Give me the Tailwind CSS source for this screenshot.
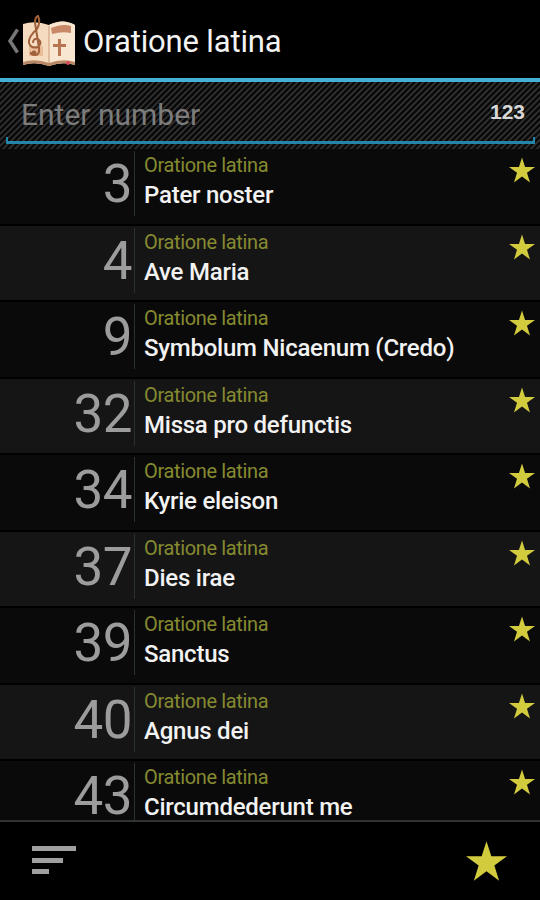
<!DOCTYPE html>
<html lang="en">
  <head>
    <meta charset="UTF-8" />
    <meta name="viewport" content="width=device-width, initial-scale=1.0" />
    <script src="https://cdn.jsdelivr.net/npm/@tailwindcss/browser@4"></script>

    <title>Oratione latina</title>
  </head>
  <body class="bg-black font-['Roboto',sans-serif]">
    <div class="flex flex-col h-[900px] w-[540px] overflow-hidden">
      <header class="flex items-center h-[78px] shrink-0 pl-[7px] pt-1 bg-black">
        <svg class="w-3 h-[26px]" viewBox="0 0 12 26">
          <path d="M10.500 1.500 3 13l7.500 11.500" fill="none" stroke="#777" stroke-width="3.500" />
        </svg>
        <!-- songbook logo -->
        <svg class="w-[56px] h-[52px] ml-[2px] mt-2 overflow-visible" viewBox="0 0 56 52">
          <path d="M2 5Q14 1 28 6Q42 -1 54 6V46Q42 42 28 47Q14 42 2 46Z" fill="#f5dcc0" />
          <path d="M28 6Q42 -1 54 6V44Q42 40 28 45Z" fill="#f9e6d0" />
          <path d="M2 43Q14 39 28 44Q42 39 54 43V46Q42 42 28 47Q14 42 2 46Z" fill="#b98765" />
          <path d="M28 7V44" stroke="#d9b18f" stroke-width="1.500" />
          <path d="M30 9Q42 4 50 7V14Q41 12 31 15Z" fill="#c98868" />
          <path d="M37 20h3v5h5v3h-5v9h-3v-9h-5v-3h5z" fill="#b87552" />
          <path d="M8 27h14v10H8z" fill="#e8bd98" />
          <path d="M14 36Q9 36 10 33M14 36Q19 36 18 29L14 4Q14 -2 17 -3Q20 3 16 10Q7 18 8 24Q10 30 17 28Q22 24 17 20Q12 19 12 24" fill="none" stroke="#a0603a" stroke-width="2" />
          <circle cx="13" cy="34" r="2.500" fill="#a0603a" />
          <circle cx="47" cy="44" r="2" fill="#d8485a" />
        </svg>
        <h1 class="ml-[6px] text-[31px] leading-none tracking-[-0.15px] text-[#f3f3f3] whitespace-nowrap">Oratione latina</h1>
      </header>
      <div
        class="relative flex items-center justify-between h-[71px] shrink-0 pl-[21px] pr-[15px] pb-[2px] border-t-[4px] border-[#45b0d5] bg-[repeating-linear-gradient(135deg,#080808_0px,#080808_1.500px,#303030_2.300px,#303030_3.300px,#080808_4.240px)]"
      >
        <span class="text-[30px] text-[#7c7c7c] leading-none">Enter number</span>
        <span class="font-['Liberation_Sans',sans-serif] font-bold text-[21px] text-[#d8d8d8] leading-none pb-[6px]">123</span>
        <div class="absolute left-[6px] right-[5px] bottom-[5px] h-[7px] border-b-[3px] border-x-2 border-[#2386a8]"></div>
      </div>
      <main id="songs" class="h-[671px] shrink-0 overflow-hidden"></main>
      <footer class="flex items-center justify-between grow pl-8 pr-[33px] border-t-2 border-[#303333] bg-black">
        <svg class="w-11 h-[29px] mb-[2px]" viewBox="0 0 44 29" fill="#a0a0a0">
          <path d="M0 0h44v5H0zM0 12h31v5H0zM0 23h17v5H0z" />
        </svg>
        <svg class="w-[41px] h-10" viewBox="0 0 24 23" fill="#d3cb3e">
          <path d="M12 0l2.830 8.700H24l-7.400 5.400L19.400 23 12 17.500 4.600 23l2.800-8.900L0 8.700h9.170z" />
        </svg>
      </footer>
    </div>
    <template id="songRow">
      <div class="flex h-[76.500px] border-b-2 border-black odd:bg-[#0a0a0a] even:bg-[#151515]">
        <div class="number w-[132px] pt-[12px] text-[53px] leading-[46px] tracking-[-0.5px] text-right text-[#9c9c9c]"></div>
        <div class="ml-[2px] mt-[2px] w-px h-[65px] bg-[#293135]"></div>
        <div class="ml-[9px] grow">
          <p class="pt-[4px] text-[20px] leading-[24px] tracking-[-0.35px] text-[#868a30]">Oratione latina</p>
          <p class="title pt-[3px] text-[24px] leading-[30px] tracking-[-0.24px] font-medium text-[#f2f2f2]"></p>
        </div>
        <svg class="w-[26px] h-[26px] mt-2 mr-[5px]" viewBox="0 0 24 23" fill="#d3cb3e">
          <path d="M12 0l2.830 8.700H24l-7.400 5.400L19.400 23 12 17.500 4.600 23l2.800-8.900L0 8.700h9.170z" />
        </svg>
      </div>
    </template>
  </body>
  <script>
    const songs = [
      [3, "Pater noster"],
      [4, "Ave Maria"],
      [9, "Symbolum Nicaenum (Credo)"],
      [32, "Missa pro defunctis"],
      [34, "Kyrie eleison"],
      [37, "Dies irae"],
      [39, "Sanctus"],
      [40, "Agnus dei"],
      [43, "Circumdederunt me"],
    ];

    const list = document.getElementById("songs");
    const template = document.getElementById("songRow");

    songs.forEach(([number, title]) => {
      const clone = template.content.cloneNode(true);
      clone.querySelector(".number").innerText = number;
      clone.querySelector(".title").innerText = title;
      list.appendChild(clone);
    });
  </script>
</html>
